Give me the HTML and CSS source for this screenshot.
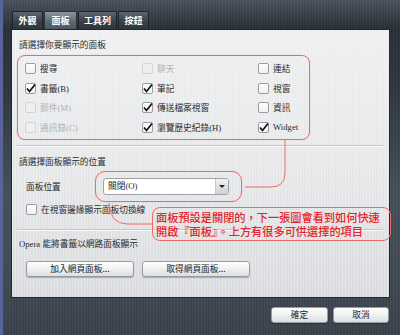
FILE: index.html
```html
<!DOCTYPE html>
<html lang="zh-Hant">
  <head>
    <meta charset="UTF-8" />
    <title>面板</title>
    <link rel="stylesheet" href="styles.css">
  </head>
  <body>
    <div class="screen">
      <div class="tabs">
        <div class="tab tab-look">外觀</div>
        <div class="tab tab-panel active">面板</div>
        <div class="tab tab-tools">工具列</div>
        <div class="tab tab-buttons">按鈕</div>
      </div>

      <div class="panel">
        <div class="heading">請選擇你要顯示的面板</div>
        <div class="grid mark">
          <label class="item"><span class="cb"></span>搜尋</label>
          <label class="item off"><span class="cb"></span>聊天</label>
          <label class="item"><span class="cb"></span>連結</label>

          <label class="item"><span class="cb"><svg viewBox="0 0 11 11"><polyline points="2,5.5 4.5,8.5 10,1.5" /></svg></span>書籤(B)</label>
          <label class="item"><span class="cb"><svg viewBox="0 0 11 11"><polyline points="2,5.5 4.5,8.5 10,1.5" /></svg></span>筆記</label>
          <label class="item"><span class="cb"></span>視窗</label>

          <label class="item off"><span class="cb"></span>郵件(M)</label>
          <label class="item"><span class="cb"><svg viewBox="0 0 11 11"><polyline points="2,5.5 4.5,8.5 10,1.5" /></svg></span>傳送檔案視窗</label>
          <label class="item"><span class="cb"></span>資訊</label>

          <label class="item off"><span class="cb"></span>通訊錄(C)</label>
          <label class="item"><span class="cb"><svg viewBox="0 0 11 11"><polyline points="2,5.5 4.5,8.5 10,1.5" /></svg></span>瀏覽歷史紀錄(H)</label>
          <label class="item"><span class="cb"><svg viewBox="0 0 11 11"><polyline points="2,5.5 4.5,8.5 10,1.5" /></svg></span>Widget</label>
        </div>

        <div class="sep"></div>

        <div class="heading heading-place">請選擇面板顯示的位置</div>
        <div class="place">
          <span class="place-label">面板位置</span>
          <div class="select-mark mark">
            <div class="select">
              <span class="select-text">關閉(O)</span>
              <span class="select-btn"></span>
            </div>
          </div>
        </div>
        <label class="item edge"><span class="cb"></span>在視窗邊緣顯示面板切換線</label>

        <div class="sep sep-web"></div>

        <div class="heading heading-web">Opera 能將書籤以網路面板顯示</div>
        <div class="web-buttons">
          <button class="btn web-btn">加入網頁面板...</button>
          <button class="btn web-btn">取得網頁面板...</button>
        </div>
      </div>

      <div class="footer">
        <button class="btn ok-btn">確定</button>
        <button class="btn cancel-btn">取消</button>
      </div>

      <!-- annotation connectors -->
      <svg class="lines" width="400" height="335" viewBox="0 0 400 335">
        <path d="M282,140 V173 Q282,187 268,187 H242" />
        <path d="M106,203 Q107,224 124,224 H149" />
      </svg>

      <div class="callout">
        <div>面板預設是關閉的，下一張圖會看到如何快速</div>
        <div>開啟『面板』。上方有很多可供選擇的項目</div>
      </div>
    </div>
  </body>
</html>
```

FILE: styles.css
```css
body {
  margin: 0;
  padding: 0;
  font-family: "Liberation Serif", "Noto Sans CJK TC", serif;
  font-size: 8.7px;
  color: #2b2b2b;
}

.screen {
  position: relative;
  width: 400px;
  height: 335px;
  overflow: hidden;
  box-sizing: border-box;
  padding: 11px 0 0 11px;
  border-left: 3px solid #56649a;
  background:
    repeating-linear-gradient(90deg, rgba(255, 255, 255, 0.03) 0 1px, rgba(0, 0, 0, 0.04) 1px 3px),
    linear-gradient(180deg, #4b535d 0, #2b3139 28px, #30373f 90px, #46505b 190px, #434c57 260px, #3b434d 335px);
}

/* tabs */

.tabs {
  display: flex;
  height: 18px;
  margin-left: -2px;
}

.tab {
  box-sizing: border-box;
  height: 18px;
  margin-right: 1px;
  border: 1px solid #1e242b;
  border-bottom: none;
  border-radius: 2px 2px 0 0;
  background: linear-gradient(180deg, #5c6671, #3b434c 50%, #2e353d);
  color: #fff;
  font-family: "Noto Sans CJK TC", sans-serif;
  font-size: 9px;
  font-weight: bold;
  line-height: 17px;
  text-align: center;
}

.tab-look { width: 31px; }
.tab-panel { width: 33px; }
.tab-tools { width: 39px; }
.tab-buttons { width: 31px; }

.tab.active {
  background: linear-gradient(180deg, #8d97a1, #626c76 50%, #4d5660);
  border-color: #2a3139;
}

/* panel */

.panel {
  box-sizing: border-box;
  width: 379px;
  height: 269px;
  margin-left: -3px;
  padding: 8px 6px 0 5px;
  border: 1px solid #1f2731;
  background:
    repeating-linear-gradient(90deg, rgba(255, 255, 255, 0.25) 0 1px, transparent 1px 3px),
    linear-gradient(180deg, #eeeff0 0%, #e6e7e9 55%, #d9dbde 100%);
}

.heading {
  margin-left: 2px;
  height: 14px;
  line-height: 14px;
}

.mark {
  border: 1px solid #ee6a6a;
  box-shadow: 0 0 1px rgba(238, 106, 106, 0.5);
}

.grid {
  box-sizing: border-box;
  width: 293px;
  height: 85px;
  margin-top: 3px;
  padding: 3px 0 0 7px;
  border-radius: 8px;
  display: grid;
  grid-template-columns: 117px 116px 1fr;
  grid-auto-rows: 19.5px;
}

.item {
  display: flex;
  align-items: center;
  gap: 4px;
  color: #2b2b2b;
}

.item.off {
  color: #b3b3b3;
}

.cb {
  box-sizing: border-box;
  width: 11px;
  height: 11px;
  flex: none;
  border: 1px solid #9a9da2;
  border-radius: 2px;
  background: linear-gradient(180deg, #fdfdfd, #f1f1f1);
  position: relative;
}

.item.off .cb {
  border-color: #d2d4d7;
  background: #eeeff0;
}

.cb svg {
  position: absolute;
  left: -1px;
  top: -1px;
  width: 11px;
  height: 11px;
  fill: none;
  stroke: #111;
  stroke-width: 1.7;
}

.sep {
  width: 366px;
  height: 1px;
  margin-top: 5px;
  background: #c3c6ca;
  border-bottom: 1px solid #f9f9f9;
}

.heading-place {
  margin-top: 8px;
}

.place {
  display: flex;
  align-items: center;
  height: 31px;
  margin-top: 2px;
  padding-left: 9px;
}

.place-label {
  width: 69px;
}

.select-mark {
  box-sizing: border-box;
  height: 31px;
  padding: 6px 12px 0 7px;
  border-radius: 10px;
}

.select {
  box-sizing: border-box;
  display: flex;
  width: 126px;
  height: 17px;
  border: 1px solid #9ea2a7;
  border-radius: 3px;
  background: #fff;
  overflow: hidden;
}

.select-text {
  flex: 1;
  padding-left: 4px;
  line-height: 15px;
}

.select-btn {
  position: relative;
  width: 12px;
  border-left: 1px solid #c4c6c9;
  background: linear-gradient(180deg, #f2f2f2, #cfd1d4);
}

.select-btn::after {
  content: "";
  position: absolute;
  left: 3px;
  top: 6px;
  border-left: 3px solid transparent;
  border-right: 3px solid transparent;
  border-top: 3px solid #222;
}

.edge {
  height: 14px;
  padding-left: 9px;
}

.sep-web {
  margin-top: 13px;
}

.heading-web {
  margin-top: 6px;
}

.web-buttons {
  display: flex;
  gap: 8px;
  margin-top: 10px;
  padding-left: 9px;
}

.btn {
  box-sizing: border-box;
  height: 16px;
  padding: 0;
  border: 1px solid #989ca2;
  border-radius: 3px;
  background: linear-gradient(180deg, #ffffff 0%, #f1f2f3 45%, #dcdee1 100%);
  box-shadow: 0 1px 1px rgba(0, 0, 0, 0.25);
  font-family: "Noto Sans CJK TC", sans-serif;
  font-size: 8.7px;
  color: #222;
  line-height: 14px;
}

.web-btn {
  width: 108px;
}

.footer {
  display: flex;
  justify-content: flex-end;
  gap: 5px;
  margin-top: 9px;
  padding-right: 11px;
}

.ok-btn { width: 57px; }
.cancel-btn { width: 56px; }

/* annotations */

.lines {
  position: absolute;
  left: 0;
  top: 0;
  fill: none;
  stroke: #ee6a6a;
  stroke-width: 1;
}

.callout {
  position: absolute;
  left: 149px;
  top: 207px;
  box-sizing: border-box;
  width: 239px;
  height: 34px;
  padding: 3px 0 0 3px;
  border: 1px solid #ee6a6a;
  border-radius: 8px;
  color: #e3262b;
  font-family: "Noto Sans CJK TC", sans-serif;
  font-size: 11.2px;
  font-weight: 500;
  line-height: 13.5px;
  white-space: nowrap;
}
```
